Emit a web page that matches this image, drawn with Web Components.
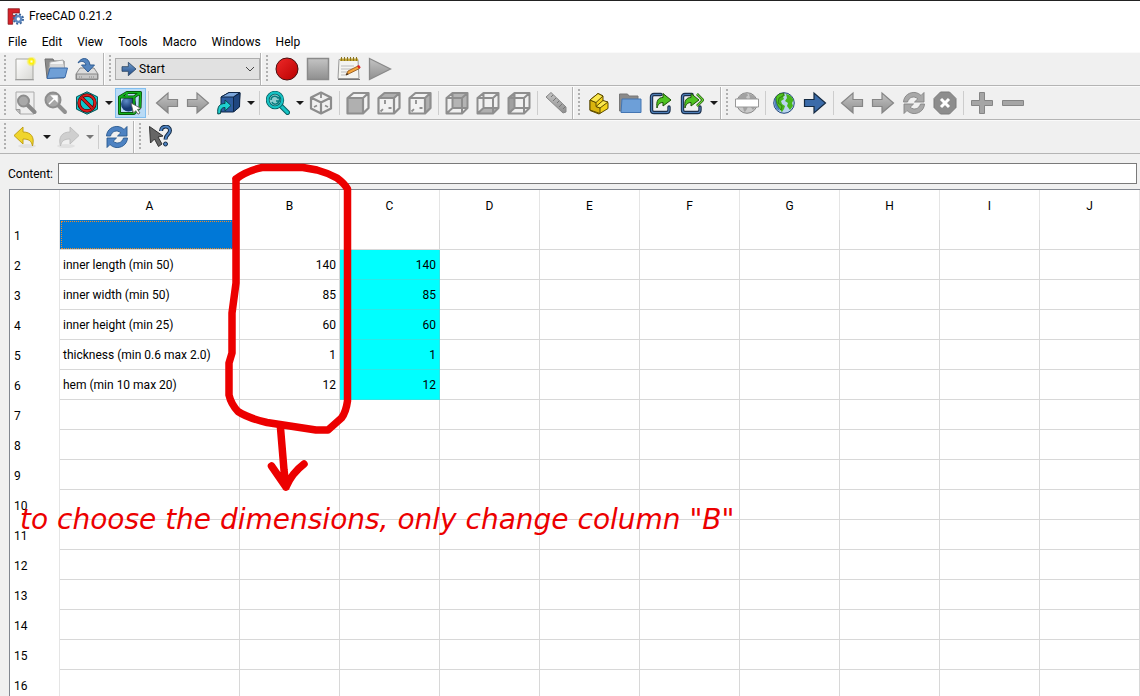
<!DOCTYPE html>
<html lang="en">
<head>
<meta charset="utf-8">
<title>FreeCAD 0.21.2</title>
<style>
html, body { margin: 0; height: 100%; overflow: hidden; background: #f0f0f0; }
body { font: 12px/16px Roboto, "Noto Sans", sans-serif; color: #000; }
</style>
</head>
<body>
<cad-window></cad-window>

<script>
const defs = `
<linearGradient id="gr" x1="0" y1="0" x2="0" y2="1"><stop offset="0" stop-color="#c4c4c4"/><stop offset="1" stop-color="#8f8f8f"/></linearGradient>
<linearGradient id="bl" x1="0" y1="0" x2="0" y2="1"><stop offset="0" stop-color="#729fcf"/><stop offset="1" stop-color="#204a87"/></linearGradient>
<linearGradient id="rd" x1="0" y1="0" x2="1" y2="1"><stop offset="0" stop-color="#ef2929"/><stop offset="1" stop-color="#b80000"/></linearGradient>
<linearGradient id="pg" x1="0" y1="0" x2="1" y2="1"><stop offset="0" stop-color="#fff"/><stop offset="1" stop-color="#d8d8d4"/></linearGradient>
<radialGradient id="sun"><stop offset="0" stop-color="#fffde0"/><stop offset=".4" stop-color="#fff200"/><stop offset="1" stop-color="#fff200" stop-opacity="0"/></radialGradient>
<radialGradient id="sph" cx=".35" cy=".3"><stop offset="0" stop-color="#5e8cc8"/><stop offset="1" stop-color="#163a74"/></radialGradient>`;
const arrowR = (fill, line) => `<path d="M1.5 8.5h9.500v-6.500l11.500 10-11.500 10v-6.500h-9.500z" fill="${fill}" stroke="${line}" stroke-width="1.200"/>`;
const flip = s => `<g transform="matrix(-1 0 0 1 24 0)">${s}</g>`;
const cube = (face) => `<path d="M1.500 7 7.500 2h15v15L17 22.500H1.500z" fill="#f2f2f2"/>${face}
<g fill="none" stroke="#8e8e8e" stroke-width="2.200" stroke-linejoin="round"><path d="M1.500 7 7.500 2h15v15L17 22.500H1.500zM1.500 7H17l5.500-5M17 7v15.500"/></g>
<path d="M3.500 20.500 6 18.200M8 9v4M11.500 17h3" stroke="#8e8e8e" stroke-width="1.800" fill="none"/>`;
const cubeOpen = (face) => `${face}<g fill="none" stroke="#8e8e8e" stroke-width="2" stroke-linejoin="round"><path d="M1.500 7 7.500 2h15v15L17 22.500H1.500zM1.500 7H17l5.500-5M17 7v15.500M7.500 2v15h15M7.500 17l-6 5.500"/></g>`;
const globe = (sea, land, line) => `<circle cx="12" cy="12" r="10.300" fill="${sea}" stroke="${line}"/><path d="M4 6c3-3.500 6-4 8-3.500l1 2-2 1.500 1 2-3 2 1 3 3 2-1 3-2 3c-2-1-1-4-3-6-2-1-4-4-3-9zM14 3c4 .5 6 3 7.500 6l-1.500 3 1 3-3 4-3-4 1-3-3-2 2-3z" fill="${land}"/>`;
const sync = (a, b) => `<g fill="${a}" stroke="${b}" stroke-width=".9" stroke-linejoin="round"><path d="M1.500 11C2 4 8 1 13 1.500c2.500.3 4.500 1.500 6 3L22 1.500V11h-9.500l3.300-3.200C12 4.500 7 6 5.500 11z"/><path d="M22.500 13C22 20 16 23 11 22.500c-2.500-.3-4.500-1.500-6-3L2 22.500V13h9.500l-3.300 3.200c3.800 3.300 8.800 1.800 10.300-3.200z"/></g>`;
const undo = (a, b) => `<ellipse cx="14" cy="21" rx="9" ry="2" fill="#000" opacity=".06"/><path d="M1 10.500 10 2v5c8 0 12 5 9.500 14C18.500 16 16 14 10 14v5z" fill="${a}" stroke="${b}" stroke-width=".9" stroke-linejoin="round"/>`;
const lens = (cx, cy) => `<path d="m${cx + 4} ${cy + 4} 7 7" stroke="#888" stroke-width="4" stroke-linecap="round"/><circle cx="${cx}" cy="${cy}" r="5.500" fill="#a9a9a9" stroke="#8d8d8d" stroke-width="2"/>`;
const exportBox = `<path d="M12 3.500H5Q2.500 3.500 2.500 6v13q0 2.500 2.500 2.500h12.500q2.500 0 2.500-2.500V16" fill="#f0f0f0" stroke="#1b2f4b" stroke-width="3.400" stroke-linecap="round"/><path d="M12 3.500H5Q2.500 3.500 2.500 6v13q0 2.500 2.500 2.500h12.500q2.500 0 2.500-2.500V16" fill="none" stroke="#4f7fb8" stroke-width="1.200" stroke-linecap="round"/>`;
const greenArrow = `<path d="M8 17C7 10 9 6.500 14 6.500V2.500l8 6.500-8 6v-3.500c-3 0-5 1.500-6 5.500z" fill="#4fc321" stroke="#1c5208" stroke-linejoin="round"/>`;

const icons = {
  logo: `<path d="M1.500 1h16v6H8v3.500h6V16H8v7H1.500z" fill="#d6232a" stroke="#7c1014"/><g stroke="#3c6499"><circle cx="16" cy="15.500" r="6.500" fill="none" stroke-width="3" stroke-dasharray="2.800 2.300"/><circle cx="16" cy="15.500" r="4" fill="#fff" stroke="#5d88c0" stroke-width="3.200"/></g>`,
  new: `<path d="M3 2h17v20.500H3z" fill="url(#pg)" stroke="#a5a5a0"/><path d="M2 22.800h19" stroke="#999"/><circle cx="18.500" cy="4.500" r="5.300" fill="url(#sun)"/>`,
  open: `<path d="M1 2h8l1 2h10v17H3z" fill="#8b8b8b" stroke="#6e6e6e"/><path d="M6 5 19 3l2 9H5z" fill="#f4f4f4" stroke="#aaa"/><path d="M6 8h14M6 10h14" stroke="#bbb"/><path d="M6 11h17.500L21 20.500 3 21.500z" fill="#6f9fd6" stroke="#3a6aa8"/>`,
  save: `<path d="M5 11h14l4 6v5.500H1V17z" fill="#dcdcdc" stroke="#888"/><path d="M1.500 17h21v5h-21z" fill="#c7c7c7" stroke="#888"/><path d="M14 20h6M4 20h3" stroke="#888" stroke-dasharray="1 1"/><path d="M3 6C6 0 14-.5 15 8h4.500L13 15 6.500 8H11C10 4 6 3.500 3 6z" fill="#5485bf" stroke="#2f5c93"/>`,
  start: arrowR('url(#bl)', '#24405f'),
  record: `<circle cx="12" cy="12" r="11" fill="url(#rd)" stroke="#4a1010"/>`,
  stop: `<path d="M1.500 1.500h21v21h-21z" fill="url(#gr)" stroke="#8a8a8a" stroke-width="1.500"/>`,
  edit: `<path d="M2 2.500h19l1 19H1z" fill="#f4f4f0" stroke="#999"/><path d="M1 22.500h22" stroke="#777"/><path d="M3 1.500h18v2.500H3z" fill="#c2a534"/><path d="M4.500 0v4M7.500 0v4M10.500 0v4M13.500 0v4M16.500 0v4M19.500 0v4" stroke="#8a7420"/><path d="M4 9h13M4 12h12M4 15h7M4 18h6" stroke="#bbb"/><path d="m9 18 2-4 10-5 1.500 2.500-10 5z" fill="#f5a53b" stroke="#8a4d12" stroke-width=".8"/><path d="m20 9 2-1 1.800 2.500-2 1z" fill="#d22"/><path d="m9 18 1-2 1.500 1.500z" fill="#222"/>`,
  play: `<path d="M1.500 1.500 22.500 12 1.500 22.500z" fill="url(#gr)" stroke="#8a8a8a" stroke-width="1.300"/>`,
  fitall: `<path d="M3 1h18v22H7l-4-4z" fill="#eee" stroke="#aaa"/><path d="M3 18.500h4V23" fill="#bbb" stroke="#999"/>${lens(10.5, 10)}`,
  fitsel: `<path d="m13 13 8 8" stroke="#909090" stroke-width="4" stroke-linecap="round"/><circle cx="9" cy="9" r="7.500" fill="#a6a6a6" stroke="#8d8d8d" stroke-width="2"/><path d="m5 13 5-5M8 5h5v5z" stroke="#fff" stroke-width="1.500" fill="#fff"/>`,
  draw: `<path d="m12 .8 10.500 5v12.400L12 23.200 1.500 18.200V5.800z" fill="#10c5c8" stroke="#06595b"/><circle cx="12" cy="12" r="8" fill="none" stroke="#500" stroke-width="3.400"/><circle cx="12" cy="12" r="8" fill="none" stroke="#d81e1e" stroke-width="2"/><path d="m6.500 6.500 11 11" stroke="#500" stroke-width="3.400"/><path d="m6.500 6.500 11 11" stroke="#d81e1e" stroke-width="2"/>`,
  bound: `<circle cx="10.500" cy="13" r="7.500" fill="url(#sph)"/><g fill="none" stroke="#063d06" stroke-width="3" stroke-linejoin="round"><path d="M1.500 6 9 1.500h13.500l-.5 15-6 6H1.500zM1.500 6H16l6.500-4.500M16 6v16"/></g><g fill="none" stroke="#12b21e" stroke-width="1.600" stroke-linejoin="round"><path d="M1.500 6 9 1.500h13.500l-.5 15-6 6H1.500zM1.500 6H16l6.500-4.500M16 6v16M9 2v4"/></g><path d="m13 12 10 5.500-3.500 1 2.500 3.500-2 1.200-2.300-3.500-2.200 2.500z" fill="#fff" stroke="#555" stroke-width=".8"/>`,
  right: arrowR('url(#gr)', '#858585'),
  left: flip(arrowR('url(#gr)', '#858585')),
  link: `<path d="m4 6 8-4.500h11L22 16l-6 5H4z" fill="#2f5d9f" stroke="#0f2747" stroke-linejoin="round"/><path d="m4 6 8-4.500h11L16.500 6z" fill="#7ba6db" stroke="#0f2747"/><path d="M16.500 6v15l6-5 .5-14z" fill="#1f467f" stroke="#0f2747"/><path d="M.8 23C0 15 3 12.500 8 12.500V9l6 5.500-6 5.500v-3.500c-3 0-4.500 1.500-4.500 6z" fill="#1fd0cf" stroke="#06494c"/>`,
  zoom: `<path d="m14 14 7.500 7.500" stroke="#066063" stroke-width="5" stroke-linecap="round"/><path d="m14 14 7.500 7.500" stroke="#17c3c4" stroke-width="3" stroke-linecap="round"/><circle cx="9" cy="9" r="7.300" fill="#8fcdd0" stroke="#066063" stroke-width="3.800"/><circle cx="9" cy="9" r="7.300" fill="none" stroke="#17c3c4" stroke-width="2.200"/><path d="M5 9c0-4 5-5 7-2l1.500-1v4H10M13 10c-1 4-6 4-7 1" fill="none" stroke="#087b7e" stroke-width="1.500"/>`,
  iso: `<g fill="none" stroke="#8c8c8c" stroke-width="2.200" stroke-linejoin="round"><path d="m12 1.500 10 5v11l-10 5-10-5v-11zM2 6.500l10 5 10-5M12 11.500v11"/></g><path d="M12 3v4M5 16l3-1.500M19 16l-3-1.500" stroke="#8c8c8c" stroke-width="1.800"/>`,
  front: cube('<path d="M1.500 7H17v15.500H1.500z" fill="#b0b0b0"/>').replace(/<path d="M3.500 20[^>]*>/, ''),
  top: cube('<path d="M1.500 7 7.500 2h15L17 7z" fill="#b0b0b0"/>'),
  rightf: cube('<path d="M17 7l5.500-5v15L17 22.500z" fill="#b0b0b0"/>'),
  rear: cubeOpen('<path d="M7.500 2h15v15h-15z" fill="#b4b4b4"/>'),
  bottom: cubeOpen('<path d="M1.500 22.500l6-5.500h15L17 22.500z" fill="#b0b0b0"/>'),
  leftf: cubeOpen('<path d="M1.500 7l6-5v15l-6 5.500z" fill="#a0a0a0"/>'),
  ruler: `<path d="m2 6 5-4.500 15 14.500v5l-3 1z" fill="url(#gr)" stroke="#878787" stroke-linejoin="round"/><path d="m9 4-2 2m5 1-3 3m6 0-2 2m5 1-3 3m6 0-2 2" stroke="#777"/>`,
  part: `<g stroke="#5c4a00" stroke-linejoin="round"><path d="m3 9 8-6.500 5 2.500v5l5 1.500v6L12 23 3 19.500z" fill="#f3d21b"/><path d="m3 9 6 2.500v4l4 1.500v5.500L3 19z" fill="#d9b40d"/><path d="m3 9 6 2.500L16 5l-5-2.500zM9 15.500l4 1.500 8-6-5-1.500z" fill="#fbe84e"/></g>`,
  group: `<path d="M1.500 3h8l1.500 2h9v15h-18.500z" fill="#8a8a8a" stroke="#777"/><path d="M4 8h19v13.500H3z" fill="#6d9fd8" stroke="#4476b3"/>`,
  export: exportBox + greenArrow,
  exports: exportBox + `<path d="m17 3 6 6-6 6" fill="none" stroke="#1c5208" stroke-width="2.600"/><path d="m17 3 6 6-6 6" fill="none" stroke="#6ed63c" stroke-width="1.200"/><g transform="translate(-3 0)">${greenArrow}</g>`,
  url: globe('#c9c9c9', '#a2a2a2', '#8a8a8a') + `<path d="M.500 8h23v8h-23z" fill="#fff" stroke="#999"/>`,
  web: globe('#b9d4ef', '#47b51c', '#24497c') + `<path d="M4 6C2 9 2 14 4.500 18l3 2C9 14 4 12 4 6z" fill="#4b7fbd"/><path d="M4 6l3-3 5-1-1 3-4 2-1 5 4 3-1 4C5 15 4 11 4 6z" fill="#4fc321" stroke="#24570d" stroke-width=".6"/>`,
  go: arrowR('#3b6ba9', '#152a42'),
  sync: sync('#4d82c2', '#29598f'),
  syncoff: sync('#a8a8a8', '#858585'),
  cancel: `<path d="M7.500 1h9L23 7.500v9L16.500 23h-9L1 16.500v-9z" fill="#8d8d8d" stroke="#7b7b7b"/><path d="m8 8 8 8m0-8-8 8" stroke="#fff" stroke-width="3"/>`,
  plus: `<path d="M9.500 1.500h5v8h8v5h-8v8h-5v-8h-8v-5h8z" fill="#a5a5a5" stroke="#858585"/>`,
  minus: `<path d="M1.500 9.500h21v5h-21z" fill="#a5a5a5" stroke="#858585"/>`,
  undo: undo('#f0d52c', '#bb9a0c'),
  redo: flip(undo('#cfcfcf', '#bbb')),
  what: `<path d="M1.500 1.500 15 11l-5 1 4 7-3.500 2.500L6.500 14l-4 4z" fill="#666" stroke="#333"/><path d="M13 6c0-5.500 9-6 9-.5 0 4-4.500 3.500-4.500 9" fill="none" stroke="#152a42" stroke-width="4"/><path d="M13 6c0-5.500 9-6 9-.5 0 4-4.500 3.500-4.500 9" fill="none" stroke="#4d82c2" stroke-width="2"/><circle cx="17.500" cy="19" r="2" fill="#4d82c2" stroke="#152a42"/>`
};

class CadIcon extends HTMLElement {
  connectedCallback() {
    this.attachShadow({ mode: 'open' }).innerHTML = `
      <style>:host { display: block; width: 24px; height: 24px; flex: none; } svg { display: block; width: 100%; height: 100%; }</style>
      <svg viewBox="0 0 24 24" aria-hidden="true"><defs>${defs}</defs>${icons[this.getAttribute('name')]}</svg>`;
  }
}
customElements.define('cad-icon', CadIcon);

class ToolButton extends HTMLElement {
  connectedCallback() {
    const label = this.getAttribute('label');
    const more = this.hasAttribute('more') ? `<button class="more" type="button" aria-label="${label} options"><svg width="8" height="4" viewBox="0 0 8 4" aria-hidden="true"><path d="M0 0h8L4 4z" fill="currentColor"/></svg></button>` : '';
    this.attachShadow({ mode: 'open' }).innerHTML = `
      <style>
        :host { display: flex; align-items: center; }
        button { box-sizing: border-box; display: grid; place-items: center; height: 30px; width: 31px; margin: 0; padding: 0 1px 0 0; border: 1px solid transparent; background: none; color: #1a1a1a; }
        .more { width: 12px; }
        :host([off]) .more { color: #777; }
        :host([on]) .main { background: #b9dbf6; border-color: #82bff0; }
      </style>
      <button class="main" type="button" aria-label="${label}"><cad-icon name="${this.getAttribute('icon')}"></cad-icon></button>${more}`;
  }
}
customElements.define('tool-button', ToolButton);

class ToolSeparator extends HTMLElement {
  connectedCallback() {
    this.attachShadow({ mode: 'open' }).innerHTML = `<style>:host { display: block; width: 1px; height: 24px; margin: 0 3px 0 2px; background: #cdcdcd; }</style>`;
  }
}
customElements.define('tool-separator', ToolSeparator);

class ToolGroup extends HTMLElement {
  connectedCallback() {
    this.attachShadow({ mode: 'open' }).innerHTML = `
      <style>
        :host { display: flex; align-items: center; height: 32px; }
        :host(:not(:last-child))::after { content: ""; width: 1px; height: 32px; background: #b4b4b4; border-right: 1px solid #fff; }
        .grip { width: 2px; height: 28px; margin: 0 4px; background: repeating-linear-gradient(#b0b0b0 0 2px, transparent 2px 4px); }
      </style>
      <span class="grip"></span><slot></slot>`;
  }
}
customElements.define('tool-group', ToolGroup);

class ToolRow extends HTMLElement {
  connectedCallback() {
    this.attachShadow({ mode: 'open' }).innerHTML = `
      <style>:host { display: flex; height: 32px; border-top: 1px solid #fafafa; border-bottom: 1px solid #b4b4b4; background: #f0f0f0; }</style><slot></slot>`;
  }
}
customElements.define('tool-row', ToolRow);

class WorkbenchPicker extends HTMLElement {
  connectedCallback() {
    this.attachShadow({ mode: 'open' }).innerHTML = `
      <style>
        :host { display: grid; grid-template-columns: 24px 1fr 18px; align-items: center; width: 145px; height: 22px; box-sizing: border-box; background: #e1e1e1; border: 1px solid #adadad; }
        cad-icon { grid-area: 1 / 1; width: 16px; height: 16px; margin-left: 5px; pointer-events: none; }
        select { grid-area: 1 / 1 / 2 / 4; appearance: none; border: 0; background: none; height: 20px; padding: 0 0 0 23px; margin: 0; font: inherit; color: inherit; }
        svg { grid-area: 1 / 3; pointer-events: none; margin-left: 4px; }
      </style>
      <select aria-label="Workbench"><option>Start</option></select>
      <cad-icon name="start"></cad-icon>
      <svg width="10" height="6" viewBox="0 0 10 6" aria-hidden="true"><path d="m1 1 4 4 4-4" fill="none" stroke="#444"/></svg>`;
  }
}
customElements.define('workbench-picker', WorkbenchPicker);

class CadMenu extends HTMLElement {
  connectedCallback() {
    const items = ['File', 'Edit', 'View', 'Tools', 'Macro', 'Windows', 'Help'];
    this.attachShadow({ mode: 'open' }).innerHTML = `
      <style>
        :host { display: block; background: #fff; }
        nav { display: flex; height: 21px; padding-left: 1px; }
        button { border: 0; background: none; margin: 0; padding: 0 8px 0 7px; font: inherit; color: inherit; }
      </style>
      <nav>${items.map(t => `<button type="button">${t}</button>`).join('')}</nav>`;
  }
}
customElements.define('cad-menu', CadMenu);

class ContentBar extends HTMLElement {
  connectedCallback() {
    this.attachShadow({ mode: 'open' }).innerHTML = `
      <style>
        :host { display: flex; align-items: center; padding: 9px 3px 5px 8px; }
        label { width: 50px; flex: none; }
        input { flex: 1; min-width: 0; box-sizing: border-box; height: 21px; border: 1px solid #7a7a7a; border-radius: 0; background: #fff; padding: 0 4px; margin: 0; font: inherit; outline: 0; }
      </style>
      <label for="content">Content:</label><input id="content" type="text">`;
  }
}
customElements.define('content-bar', ContentBar);

class CadSheet extends HTMLElement {
  connectedCallback() {
    const cols = [...'ABCDEFGHIJ'];
    const data = {
      2: ['inner length (min 50)', 140], 3: ['inner width (min 50)', 85], 4: ['inner height (min 25)', 60],
      5: ['thickness (min 0.6 max 2.0)', 1], 6: ['hem (min 10 max 20)', 12]
    };
    const cell = (r, c) => {
      const row = data[r];
      if (r === 1 && c === 0) return '<td class="selected"></td>';
      if (!row || c > 2) return '<td></td>';
      if (c === 0) return `<td>${row[0]}</td>`;
      return `<td class="num${c === 2 ? ' linked' : ''}">${row[1]}</td>`;
    };
    const rows = Array.from({ length: 16 }, (_, i) => `<tr><th scope="row">${i + 1}</th>${cols.map((_, c) => cell(i + 1, c)).join('')}</tr>`).join('');
    this.attachShadow({ mode: 'open' }).innerHTML = `
      <style>
        :host { display: block; background: #fff; border: solid #828790; border-width: 1px 0 0 1px; overflow: hidden; }
        table { table-layout: fixed; width: 1130px; border-collapse: separate; border-spacing: 0; }
        .heads { width: 50px; } .wide { width: 180px; }
        th, td { box-sizing: border-box; height: 30px; padding: 0 3px; font-weight: 400; text-align: left; border-right: 1px solid #d8d8d8; white-space: nowrap; }
        td { border-bottom: 1px solid #d8d8d8; }
        th { padding-top: 2px; border-color: #e5e5e5; }
        thead th { text-align: center; }
        tbody th { padding-left: 4px; }
        .num { text-align: right; }
        .linked { background: #0ff; border-color: #2ee6e6; }
        .selected { background: #0078d7; background-clip: padding-box; outline: 1px dotted #f08a24; outline-offset: -2px; }
      </style>
      <table>
        <colgroup><col class="heads"><col class="wide">${'<col>'.repeat(9)}</colgroup>
        <thead><tr><th></th>${cols.map(c => `<th scope="col">${c}</th>`).join('')}</tr></thead>
        <tbody>${rows}</tbody>
      </table>`;
  }
}
customElements.define('cad-sheet', CadSheet);

class MarkerNote extends HTMLElement {
  connectedCallback() {
    this.attachShadow({ mode: 'open' }).innerHTML = `
      <style>
        :host { display: block; position: absolute; left: 0; top: 0; pointer-events: none; color: #ec0000; }
        svg { display: block; }
        p { position: absolute; left: 20px; top: 504px; margin: 0; font: italic 28px/30px "DejaVu Sans", sans-serif; white-space: nowrap; }
      </style>
      <svg width="360" height="500" viewBox="0 1 360 500" aria-hidden="true">
        <g fill="none" stroke="currentColor" stroke-width="7.500" stroke-linecap="round" stroke-linejoin="round">
          <path d="M236 179Q246 171 262 167.500H303L317 170Q328 173 337 178Q345 184 347.500 189V401Q346 412 341.500 418L328 430H316L267 422.500Q248 418 238 411.500Q231 404 229 395V363L232 353V313L236 283V179"/>
          <path d="M280.500 428 284 470 286 487M271.500 466 286 487Q292 473 304 464"/>
        </g>
      </svg>
      <p><slot></slot></p>`;
  }
}
customElements.define('marker-note', MarkerNote);

class CadWindow extends HTMLElement {
  connectedCallback() {
    const b = (icon, label, flags = '') => `<tool-button icon="${icon}" label="${label}" ${flags}></tool-button>`;
    const sep = '<tool-separator></tool-separator>';
    this.attachShadow({ mode: 'open' }).innerHTML = `
      <style>
        :host { display: flex; flex-direction: column; position: relative; height: 100vh; box-sizing: border-box; border-top: 1px solid #222; overflow: hidden; }
        header { display: flex; align-items: center; gap: 5px; height: 30px; flex: none; padding-left: 7px; background: #fff; }
        header cad-icon { width: 17px; height: 17px; }
        h1 { margin: 0; font: inherit; }
        cad-menu, tool-row, content-bar { flex: none; }
        cad-sheet { flex: 1; min-height: 0; margin-left: 9px; }
      </style>
      <header><cad-icon name="logo"></cad-icon><h1>FreeCAD 0.21.2</h1></header>
      <cad-menu></cad-menu>
      <tool-row>
        <tool-group>${b('new', 'New')}${b('open', 'Open')}${b('save', 'Save')}</tool-group>
        <tool-group><workbench-picker></workbench-picker></tool-group>
        <tool-group>${b('record', 'Record macro')}${b('stop', 'Stop macro')}${b('edit', 'Macros')}${b('play', 'Run macro')}</tool-group>
      </tool-row>
      <tool-row>
        <tool-group>${b('fitall', 'Fit all')}${b('fitsel', 'Fit selection')}${b('draw', 'Draw style', 'more')}${b('bound', 'Bounding box', 'on')}${sep}${b('left', 'Back')}${b('right', 'Forward')}${b('link', 'Go to linked object', 'more')}${sep}${b('zoom', 'Sync view', 'more')}${b('iso', 'Isometric')}${sep}${b('front', 'Front')}${b('top', 'Top')}${b('rightf', 'Right')}${sep}${b('rear', 'Rear')}${b('bottom', 'Bottom')}${b('leftf', 'Left')}${sep}${b('ruler', 'Measure')}</tool-group>
        <tool-group>${b('part', 'Create part')}${b('group', 'Create group')}${b('export', 'Make link')}${b('exports', 'Link actions', 'more')}</tool-group>
        <tool-group>${b('url', 'Set URL')}${sep}${b('web', 'Open website')}${b('go', 'Start page')}${sep}${b('left', 'Previous page')}${b('right', 'Next page')}${b('syncoff', 'Refresh page')}${b('cancel', 'Stop loading')}${sep}${b('plus', 'Zoom in')}${b('minus', 'Zoom out')}</tool-group>
      </tool-row>
      <tool-row>
        <tool-group>${b('undo', 'Undo', 'more')}${b('redo', 'Redo', 'more off')}${sep}${b('sync', 'Refresh')}</tool-group>
        <tool-group>${b('what', "What's this?")}</tool-group>
      </tool-row>
      <content-bar></content-bar>
      <cad-sheet></cad-sheet>
      <marker-note>to choose the dimensions, only change column "B"</marker-note>`;
  }
}
customElements.define('cad-window', CadWindow);
</script>
</body>
</html>
